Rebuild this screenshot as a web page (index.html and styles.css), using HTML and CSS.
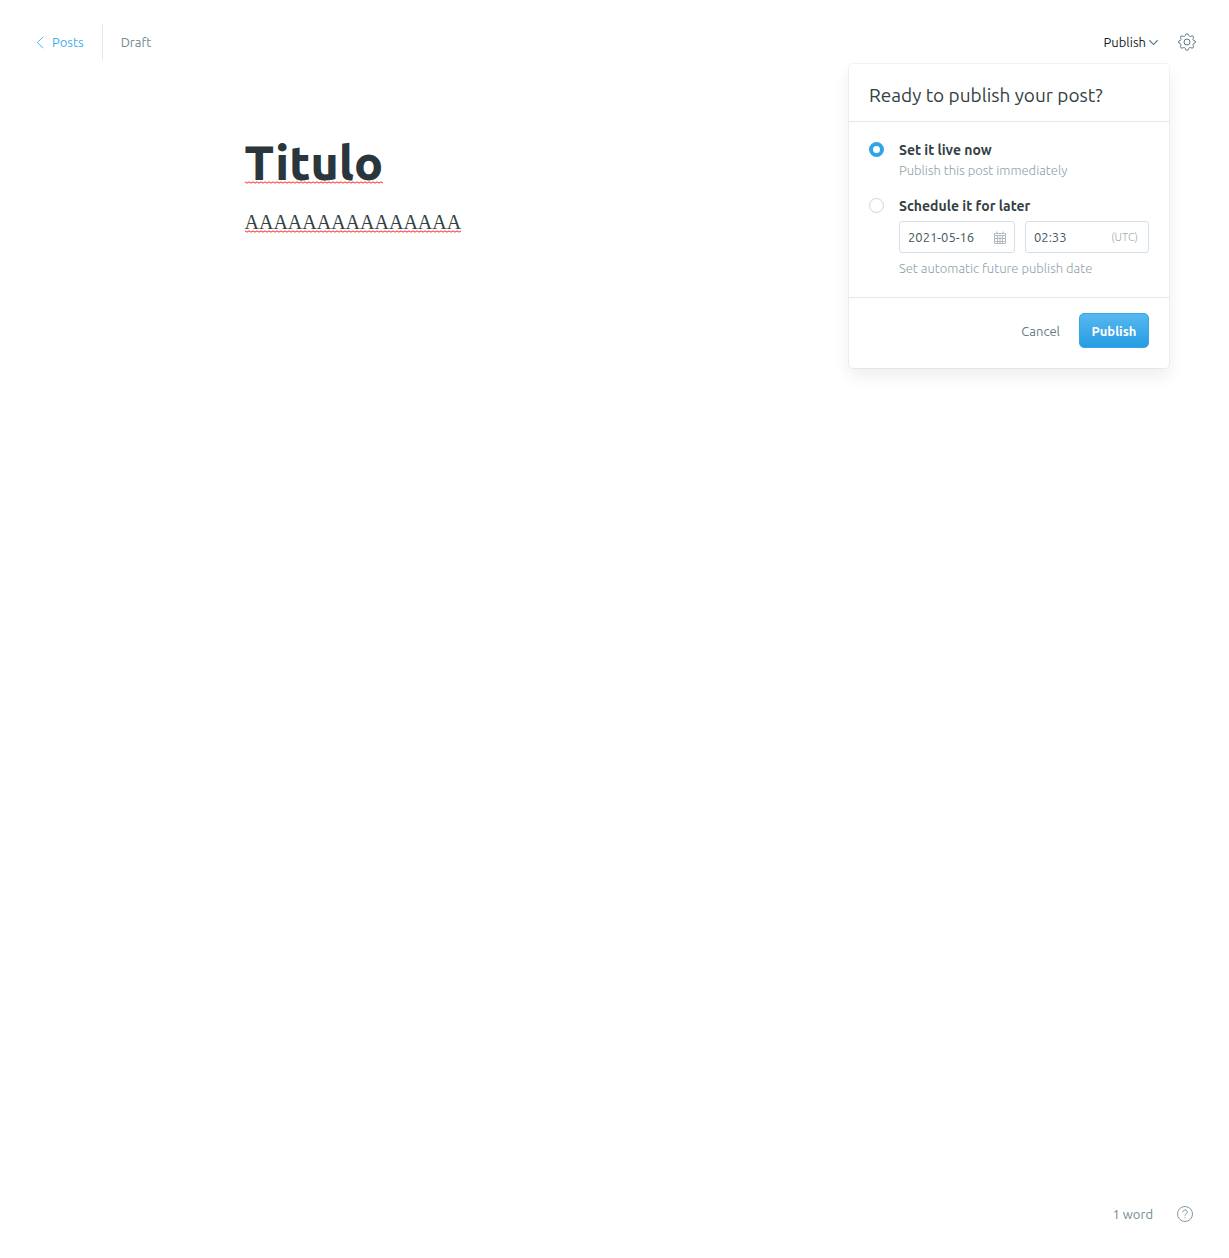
FILE: index.html
```html
<!DOCTYPE html>
<html lang="en">
<head>
<meta charset="utf-8">
<meta name="viewport" content="width=device-width, initial-scale=1">
<title>Titulo - Editor</title>
<link rel="stylesheet" href="styles.css">
</head>
<body>
<header class="topbar">
  <nav class="crumbs">
    <a class="back" href="#posts">
      <svg class="back-icon" viewBox="0 0 8 14" aria-hidden="true"><path d="M7.5 1 1 7l6.500 6"/></svg>
      Posts
    </a>
    <span class="status">Draft</span>
  </nav>
  <div class="actions">
    <div class="publish">
      <button class="publish-trigger" type="button" aria-expanded="true">
        Publish
        <svg class="chevron" viewBox="0 0 8 6" aria-hidden="true"><path d="M.4 1 4 4.800 7.600 1"/></svg>
      </button>
      <form class="menu">
        <h2 class="menu-title">Ready to publish your post?</h2>
        <div class="menu-body">
          <div class="option">
            <input class="radio" type="radio" name="when" id="now" checked>
            <div class="option-text">
              <label class="option-label" for="now">Set it live now</label>
              <p class="hint">Publish this post immediately</p>
            </div>
          </div>
          <div class="option">
            <input class="radio" type="radio" name="when" id="later">
            <div class="option-text">
              <label class="option-label" for="later">Schedule it for later</label>
              <div class="schedule">
                <label class="field date">
                  <input class="field-input" type="text" value="2021-05-16" aria-label="Date">
                  <svg class="calendar" viewBox="0 0 12 13" aria-hidden="true"><path d="M.5 2.500h11v10H.5zM.5 4.500h11M.5 7.500h11M.5 10.500h11M3.500 4.500v8M6 4.500v8M8.500 4.500v8M3 .5v2M9 .5v2"/></svg>
                </label>
                <label class="field time">
                  <input class="field-input" type="text" value="02:33" aria-label="Time">
                  <span class="zone">(UTC)</span>
                </label>
              </div>
              <p class="hint">Set automatic future publish date</p>
            </div>
          </div>
        </div>
        <div class="menu-footer">
          <button class="cancel" type="button">Cancel</button>
          <button class="confirm" type="submit">Publish</button>
        </div>
      </form>
    </div>
    <button class="icon-button" type="button" aria-label="Settings">
      <svg class="gear" viewBox="0 0 18 18" aria-hidden="true"><circle cx="9" cy="9" r="3"/><path d="M7.1 2.700Q7.500.7 9 .7t1.900 2q.5 1.200 1.600.7 1.800-1.100 2.600-.2t0 2.500q-.7 1.100.5 1.600 1.900.5 1.900 1.700t-1.900 1.700q-1.200.5-.5 1.600.9 1.700 0 2.500t-2.600-.2q-1.100-.5-1.600.7-.4 2-1.900 2t-1.900-2q-.5-1.200-1.600-.7-1.800 1.100-2.600.2t0-2.500q.7-1.100-.5-1.600Q.5 10.200.5 9t1.900-1.700q1.200-.5.5-1.600-.9-1.700 0-2.500t2.600.2q1.100.5 1.600-.7z"/></svg>
    </button>
  </div>
</header>
<main class="editor">
  <h1 class="title" contenteditable="true" spellcheck="false"><span class="misspelt">Titulo</span></h1>
  <div class="content" contenteditable="true" spellcheck="false" role="textbox" aria-label="Post content"><p class="paragraph"><span class="misspelt">AAAAAAAAAAAAAAA</span></p></div>
</main>
<footer class="bottombar">
  <span class="count">1 word</span>
  <a class="help" href="#help" aria-label="Help">
    <svg class="help-icon" viewBox="0 0 16 16" aria-hidden="true"><circle cx="8" cy="8" r="7.500"/><path d="M5.700 6.300C5.700 4.900 6.700 4 8 4s2.300.9 2.300 2.100C10.300 7.700 8 7.700 8 9.600M8 11.300v1"/></svg>
  </a>
</footer>
</body>
</html>
```
FILE: styles.css
```css
* { box-sizing: border-box; }

body {
  margin: 0;
  min-height: 100vh;
  display: flex;
  flex-direction: column;
  background: #fff;
  color: #343f44;
  font: 13px/20px Ubuntu, "Noto Sans", sans-serif;
}

h1, h2, p { margin: 0; }
svg { fill: none; stroke: currentColor; }
button {
  margin: 0;
  padding: 0;
  border: 0;
  background: none;
  color: inherit;
  font: inherit;
  cursor: pointer;
}

.topbar {
  display: flex;
  justify-content: space-between;
  align-items: center;
  padding: 24px 33px 0 36px;
}
.crumbs, .actions { display: flex; align-items: center; }
.back {
  display: flex;
  align-items: center;
  gap: 8px;
  height: 36px;
  padding-right: 18px;
  border-right: 1px solid #dfe9f0;
  color: #3eb0ef;
  text-decoration: none;
}
.back-icon { width: 8px; height: 13px; stroke-width: 1; }
.status { padding-left: 18px; color: #738a94; }

.actions { gap: 20px; }
.publish { position: relative; }
.publish-trigger { display: flex; align-items: center; gap: 3px; height: 36px; color: #15212a; }
.chevron { width: 9px; height: 7px; color: #54738a; }
.icon-button { display: flex; color: #5f7883; }
.gear { width: 18px; height: 18px; }

.menu {
  position: absolute;
  top: 40px;
  right: -11px;
  z-index: 1;
  width: 320px;
  border-radius: 4px;
  background: #fff;
  box-shadow: 0 0 0 1px rgba(99, 114, 130, .08), 0 8px 16px rgba(27, 39, 51, .08);
}
.menu-title {
  padding: 19px 20px 14px;
  border-bottom: 1px solid #dfe9f0;
  font-size: 19px;
  line-height: 24px;
  font-weight: 400;
}
.menu-body {
  display: flex;
  flex-direction: column;
  gap: 16px;
  padding: 18px 20px 19px;
}
.option { display: flex; gap: 15px; }
.option-text { flex: 1; min-width: 0; }
.option-label { display: block; font-size: 14px; font-weight: 600; }
.radio {
  appearance: none;
  flex: none;
  width: 15px;
  height: 15px;
  margin: 2px 0 0;
  border: 1px solid #c5d8e4;
  border-radius: 50%;
  background: #fff;
}
.radio:checked { border: 4px solid #2fa4e7; }
.hint { color: #8fa1aa; font-weight: 300; }

.schedule { display: flex; gap: 10px; padding: 5px 0; }
.field {
  display: flex;
  align-items: center;
  height: 32px;
  padding: 0 8px;
  border: 1px solid #d3e0e9;
  border-radius: 3px;
}
.date { width: 116px; }
.time { flex: 1; min-width: 0; padding-right: 10px; }
.field-input {
  flex: 1;
  width: 0;
  min-width: 0;
  padding: 0;
  border: 0;
  outline: 0;
  background: none;
  color: #43535a;
  font: inherit;
}
.calendar { flex: none; width: 12px; height: 13px; color: #b2bbc0; }
.zone { color: #9baab2; font-size: 11px; font-weight: 300; }

.menu-footer {
  display: flex;
  justify-content: flex-end;
  gap: 19px;
  padding: 15px 20px 20px;
  border-top: 1px solid #dfe9f0;
}
.cancel { color: #667b85; }
.confirm {
  width: 70px;
  height: 35px;
  border: 1px solid #3aa5e4;
  border-radius: 5px;
  background: linear-gradient(#56b8f0, #279ce2);
  color: #fff;
  font-weight: 600;
}

.editor {
  flex: 1;
  width: 100%;
  max-width: 740px;
  margin: 0 auto;
  padding-top: 72px;
}
.title {
  --squiggle-lift: 5px;
  font-size: 48px;
  line-height: 60px;
  font-weight: 800;
  color: #2b363c;
  outline: 0;
}
.content {
  --squiggle-lift: 0px;
  padding-top: 14px;
  font-family: "Liberation Serif", serif;
  font-size: 20px;
  line-height: 32px;
  outline: 0;
}
.misspelt {
  background: url("data:image/svg+xml,%3Csvg xmlns='http://www.w3.org/2000/svg' width='4' height='3'%3E%3Cpath d='M-1 1.500Q0 .2 1 1.500T3 1.500T5 1.500' fill='none' stroke='%23f22'/%3E%3C/svg%3E") 0 calc(100% - var(--squiggle-lift)) repeat-x;
}

.bottombar {
  display: flex;
  justify-content: flex-end;
  align-items: center;
  gap: 24px;
  padding: 0 36px 34px;
  color: #738a94;
}
.help { display: flex; color: #8499a3; }
.help-icon { width: 16px; height: 16px; }
```
